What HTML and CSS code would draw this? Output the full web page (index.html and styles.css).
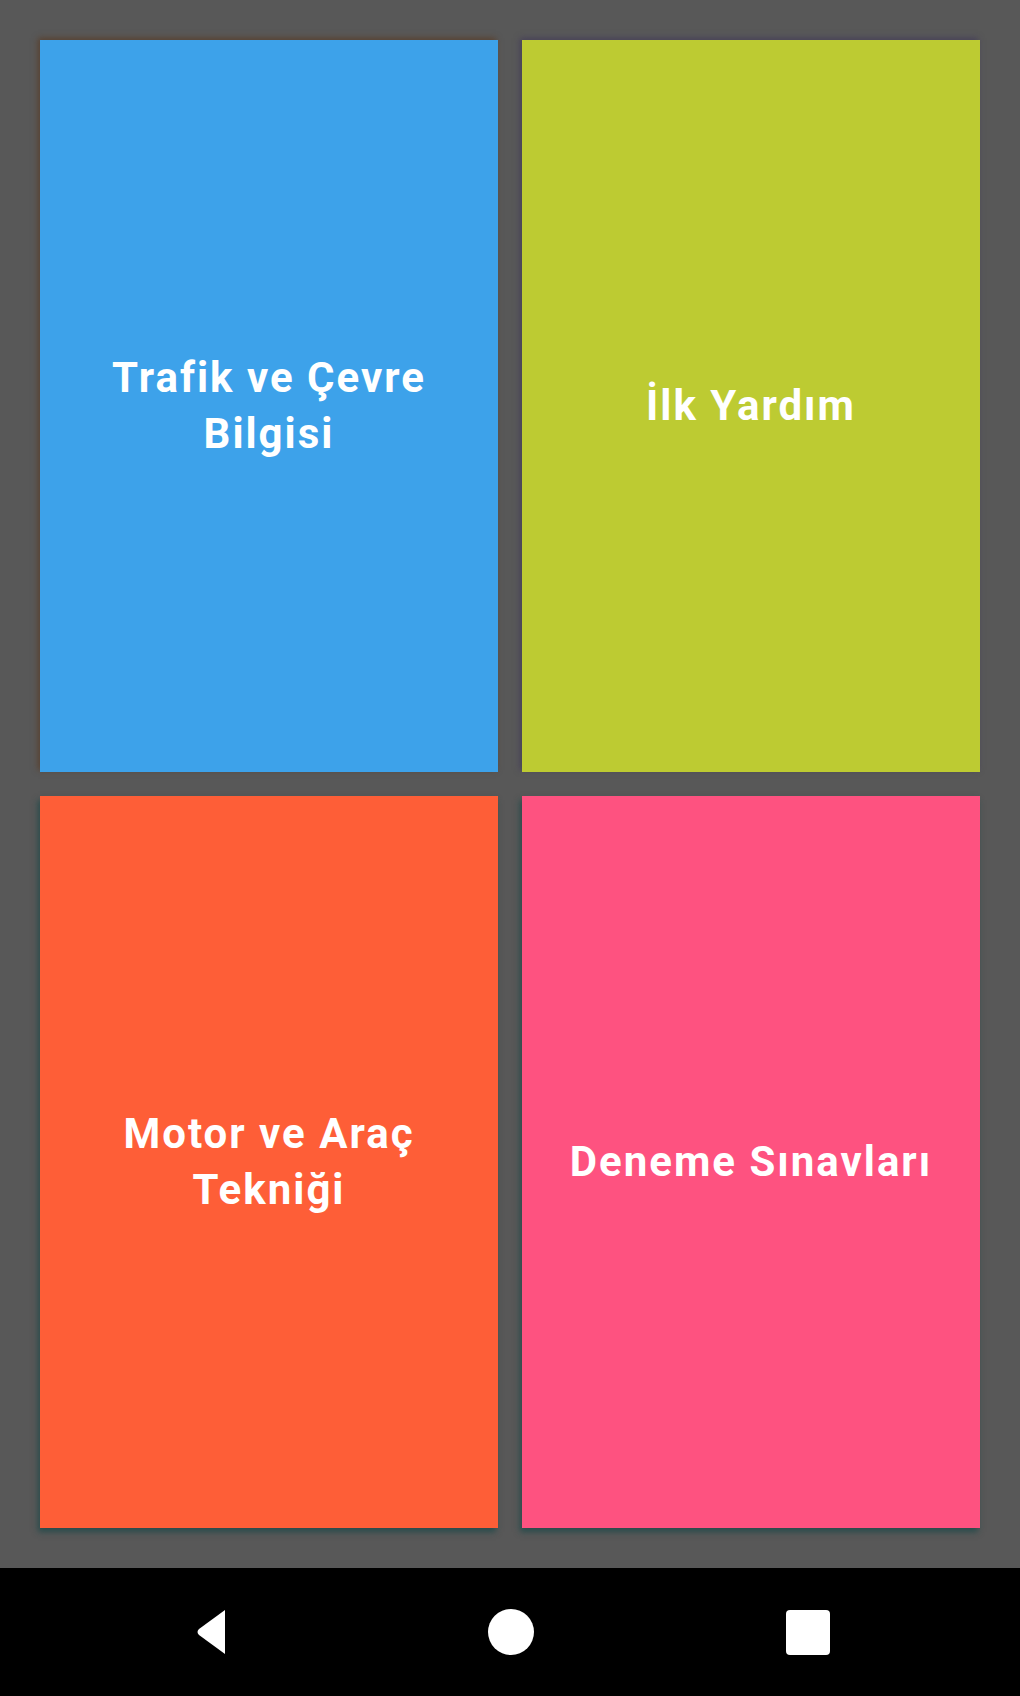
FILE: index.html
```html
<!DOCTYPE html>
<html lang="tr">
<head>
<meta charset="utf-8">
<title>Ehliyet</title>
<link rel="stylesheet" href="styles.css">
</head>
<body>
<div class="screen">
  <main class="grid">
    <div class="tile tile-blue"><span class="label">Trafik ve Çevre<br>Bilgisi</span></div>
    <div class="tile tile-lime"><span class="label">İlk Yardım</span></div>
    <div class="tile tile-orange"><span class="label">Motor ve Araç<br>Tekniği</span></div>
    <div class="tile tile-pink"><span class="label">Deneme Sınavları</span></div>
  </main>
  <nav class="navbar">
    <svg class="nav-icon" width="48" height="48" viewBox="0 0 48 48"><path d="M36 2 L36 46 L10 27 Q7 24 10 21 Z" fill="#fff"/></svg>
    <svg class="nav-icon" width="48" height="48" viewBox="0 0 48 48"><circle cx="24" cy="24" r="23" fill="#fff"/></svg>
    <svg class="nav-icon" width="48" height="48" viewBox="0 0 48 48"><rect x="2" y="2" width="44" height="45" rx="4" fill="#fff"/></svg>
  </nav>
</div>
</body>
</html>
```

FILE: styles.css
```css
html, body {
  margin: 0;
  padding: 0;
  background: #000;
}
.screen {
  width: 1020px;
  height: 1696px;
  display: flex;
  flex-direction: column;
  font-family: Roboto, "Noto Sans", "Liberation Sans", sans-serif;
}
.grid {
  height: 1568px;
  box-sizing: border-box;
  background: #585858;
  padding: 40px;
  display: grid;
  grid-template-columns: 1fr 1fr;
  grid-template-rows: 1fr 1fr;
  gap: 24px;
}
.tile {
  display: flex;
  align-items: center;
  justify-content: center;
  text-align: center;
}
.tile-blue { background: #3da2ea; box-shadow: -2px -2px 6px rgba(90, 50, 20, 0.6); }
.tile-lime { background: #bdcb32; box-shadow: -2px -2px 6px rgba(60, 50, 90, 0.6); }
.tile-orange { background: #fe5e37; box-shadow: -2px 4px 6px rgba(20, 70, 70, 0.7); }
.tile-pink { background: #fe5280; box-shadow: -2px 4px 6px rgba(20, 70, 70, 0.7); }
.label {
  color: #fff;
  font-size: 42px;
  font-weight: 700;
  letter-spacing: 2px;
  line-height: 56px;
}
.navbar {
  flex: 1;
  background: #000;
  display: flex;
  align-items: center;
  justify-content: space-between;
  padding: 0 188px 0 189px;
}
.nav-icon {
  display: block;
}
```
